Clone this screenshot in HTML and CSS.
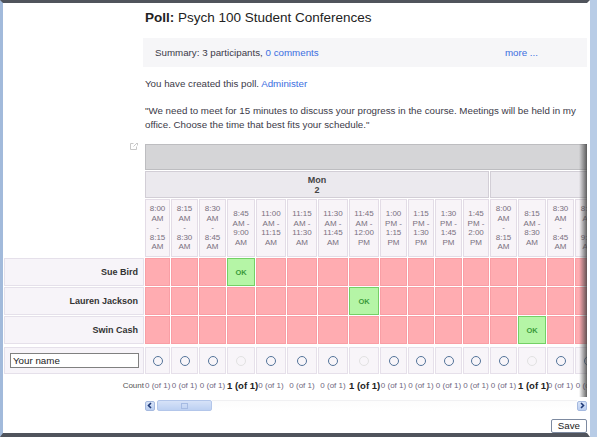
FILE: index.html
```html
<!DOCTYPE html>
<html lang="en">

<head>
  <meta charset="UTF-8">
  <title>Poll: Psych 100 Student Conferences</title>
  <link rel="stylesheet" href="styles.css">
</head>

<body>

  <div class="frame">
    <h1 class="title"><b>Poll:</b> Psych 100 Student Conferences</h1>

    <div class="summary">
      <span>Summary: 3 participants, <a href="#">0 comments</a></span>
      <a class="more" href="#">more ...</a>
    </div>

    <p class="created">You have created this poll. <a href="#">Administer</a></p>

    <p class="quote">"We need to meet for 15 minutes to discuss your progress in the course. Meetings will be held in my<br>office. Choose the time that best fits your schedule."</p>

    <div class="grid-clip">
      <table class="grid">
        <colgroup>
          <col class="c-name">
          <col class="w25"><col class="w27"><col class="w27"><col class="w28">
          <col class="w30"><col class="w30"><col class="w30"><col class="w30">
          <col class="w27"><col class="w26"><col class="w27"><col class="w26">
          <col class="w27"><col class="w28"><col class="w27"><col class="w27">
          <col class="w27"><col class="w27"><col class="w27"><col class="w27">
        </colgroup>

        <tr class="band">
          <th class="corner" rowspan="3">
            <svg class="pop" width="8" height="8" viewBox="0 0 8 8">
              <path d="M3.5 1.5h-3v6h6v-3" fill="none" stroke="#c8c8c8" />
              <path d="M4.5 .5h3v3M7.5 .5 3.5 4.5" fill="none" stroke="#c8c8c8" />
            </svg>
          </th>
          <th class="month" colspan="20"></th>
        </tr>

        <tr class="days">
          <th class="day" colspan="12">Mon<br>2</th>
          <th class="day" colspan="8"></th>
        </tr>

        <tr class="times">
          <th class="time">8:00<br>AM<br>-<br>8:15<br>AM</th>
          <th class="time">8:15<br>AM<br>-<br>8:30<br>AM</th>
          <th class="time">8:30<br>AM<br>-<br>8:45<br>AM</th>
          <th class="time">8:45<br>AM -<br>9:00<br>AM</th>
          <th class="time">11:00<br>AM -<br>11:15<br>AM</th>
          <th class="time">11:15<br>AM -<br>11:30<br>AM</th>
          <th class="time">11:30<br>AM -<br>11:45<br>AM</th>
          <th class="time">11:45<br>AM -<br>12:00<br>PM</th>
          <th class="time">1:00<br>PM -<br>1:15<br>PM</th>
          <th class="time">1:15<br>PM -<br>1:30<br>PM</th>
          <th class="time">1:30<br>PM -<br>1:45<br>PM</th>
          <th class="time">1:45<br>PM -<br>2:00<br>PM</th>
          <th class="time">8:00<br>AM<br>-<br>8:15<br>AM</th>
          <th class="time">8:15<br>AM -<br>8:30<br>AM</th>
          <th class="time">8:30<br>AM<br>-<br>8:45<br>AM</th>
          <th class="time">8:45<br>AM<br>-<br>9:00<br>AM</th>
          <th class="time"></th>
          <th class="time"></th>
          <th class="time"></th>
          <th class="time"></th>
        </tr>

        <tr class="person">
          <th class="name">Sue Bird</th>
          <td class="no"></td><td class="no"></td><td class="no"></td><td class="ok">OK</td>
          <td class="no"></td><td class="no"></td><td class="no"></td><td class="no"></td>
          <td class="no"></td><td class="no"></td><td class="no"></td><td class="no"></td>
          <td class="no"></td><td class="no"></td><td class="no"></td><td class="no"></td>
          <td class="no"></td><td class="no"></td><td class="no"></td><td class="no"></td>
        </tr>
        <tr class="person">
          <th class="name">Lauren Jackson</th>
          <td class="no"></td><td class="no"></td><td class="no"></td><td class="no"></td>
          <td class="no"></td><td class="no"></td><td class="no"></td><td class="ok">OK</td>
          <td class="no"></td><td class="no"></td><td class="no"></td><td class="no"></td>
          <td class="no"></td><td class="no"></td><td class="no"></td><td class="no"></td>
          <td class="no"></td><td class="no"></td><td class="no"></td><td class="no"></td>
        </tr>
        <tr class="person">
          <th class="name">Swin Cash</th>
          <td class="no"></td><td class="no"></td><td class="no"></td><td class="no"></td>
          <td class="no"></td><td class="no"></td><td class="no"></td><td class="no"></td>
          <td class="no"></td><td class="no"></td><td class="no"></td><td class="no"></td>
          <td class="no"></td><td class="ok">OK</td><td class="no"></td><td class="no"></td>
          <td class="no"></td><td class="no"></td><td class="no"></td><td class="no"></td>
        </tr>

        <tr class="spacer"><td colspan="21"></td></tr>

        <tr class="vote">
          <th class="name"><input type="text" class="your-name" value="Your name"></th>
          <td><span class="radio"></span></td><td><span class="radio"></span></td>
          <td><span class="radio"></span></td><td><span class="radio off"></span></td>
          <td><span class="radio"></span></td><td><span class="radio"></span></td>
          <td><span class="radio"></span></td><td><span class="radio off"></span></td>
          <td><span class="radio"></span></td><td><span class="radio"></span></td>
          <td><span class="radio"></span></td><td><span class="radio"></span></td>
          <td><span class="radio"></span></td><td><span class="radio off"></span></td>
          <td><span class="radio"></span></td><td><span class="radio"></span></td>
          <td><span class="radio"></span></td><td><span class="radio"></span></td>
          <td><span class="radio"></span></td><td><span class="radio"></span></td>
        </tr>

        <tr class="count">
          <th class="label">Count</th>
          <td>0 (of 1)</td><td>0 (of 1)</td><td>0 (of 1)</td><td class="full">1 (of 1)</td>
          <td>0 (of 1)</td><td>0 (of 1)</td><td>0 (of 1)</td><td class="full">1 (of 1)</td>
          <td>0 (of 1)</td><td>0 (of 1)</td><td>0 (of 1)</td><td>0 (of 1)</td>
          <td>0 (of 1)</td><td class="full">1 (of 1)</td><td>0 (of 1)</td><td>0 (of 1)</td>
          <td></td><td></td><td></td><td></td>
        </tr>
      </table>
    </div>

    <div class="scrollbar">
      <span class="sb-btn">
        <svg width="6" height="7" viewBox="0 0 6 7"><path d="M4 1 1.5 3.5 4 6" fill="none" stroke="#1f3a78" stroke-width="1.6" /></svg>
      </span>
      <span class="sb-thumb"><span class="grip"></span></span>
      <span class="sb-track"></span>
      <span class="sb-btn">
        <svg width="6" height="7" viewBox="0 0 6 7"><path d="M2 1 4.5 3.5 2 6" fill="none" stroke="#1f3a78" stroke-width="1.6" /></svg>
      </span>
    </div>

    <div class="actions">
      <button class="save">Save</button>
    </div>
  </div>

</body>

</html>
```

FILE: styles.css
```css
body {
  margin: 0;
  background-color: #b8cce6;
  font-family: "Liberation Sans", Arial, sans-serif;
  color: #3c3a48;
}

a {
  color: #3c6ee0;
  text-decoration: none;
}

.frame {
  width: 584px;
  height: 430px;
  background-color: #fff;
  border-left: 3px solid #a2badb;
  border-top: 3px solid #50545c;
  border-bottom: 4px solid #50545c;
  border-right: 3px solid #fff;
  overflow: hidden;
}

.title {
  margin: 7px 0 0 142px;
  font-size: 13.5px;
  line-height: 15.5px;
  font-weight: normal;
  color: #222;
}

.summary {
  display: flex;
  align-items: center;
  width: 432px;
  height: 29px;
  margin: 12.5px 0 0 140px;
  padding-left: 12px;
  background-color: #f6f6f8;
  font-size: 9.75px;
}

.summary .more {
  margin-left: auto;
  margin-right: 49px;
}

.created,
.quote {
  margin: 10px 0 0 142px;
  font-size: 9.75px;
  line-height: 14.5px;
}

.quote {
  margin-top: 12px;
}

/* poll grid */

.grid-clip {
  position: relative;
  width: 584px;
  margin-top: 10.5px;
  overflow: hidden;
}

.grid-clip::after {
  content: "";
  position: absolute;
  top: 1px;
  right: 0;
  bottom: 0;
  width: 8px;
  background: linear-gradient(to right, rgba(90, 90, 90, 0), rgba(60, 60, 60, 0.8));
}

.grid {
  table-layout: fixed;
  width: 712px;
  border-collapse: separate;
  border-spacing: 1px;
}

.grid th,
.grid td {
  padding: 0;
  box-sizing: border-box;
}

.c-name { width: 140px; }
.w25 { width: 25px; }
.w26 { width: 26px; }
.w27 { width: 27px; }
.w28 { width: 28px; }
.w30 { width: 30px; }

.band { height: 26px; }
.days { height: 27px; }
.times { height: 58px; }
.person { height: 28px; }
.spacer { height: 1px; }
.vote { height: 27px; }
.count { height: 21px; }

.corner {
  vertical-align: top;
  text-align: right;
}

.pop {
  display: block;
  margin: -2px 6px 0 auto;
}

.month {
  background-color: #d5d5d7;
  border: 1px solid #bdbdc0;
}

.day {
  background-color: #ebe9ee;
  border: 1px solid #d2ced6;
  font-size: 9px;
  line-height: 10px;
  color: #444;
}

.time {
  background-color: #f8f4f8;
  border: 1px solid #e3dce6;
  font-size: 8px;
  line-height: 9.5px;
  font-weight: normal;
  color: #787080;
}

.name {
  background-color: #f7f4f9;
  border: 1px solid #e5e0ea;
  text-align: right;
  padding-right: 5px !important;
  font-size: 9px;
  color: #333;
}

.no {
  background-color: #ffacb1;
  border: 1px solid #f99ea5;
}

.ok {
  background-color: #b5f5a6;
  border: 1px solid #74d065;
  text-align: center;
  font-size: 7.5px;
  font-weight: bold;
  color: #3b9b3b;
}

.vote .name {
  text-align: left;
  padding-left: 5px !important;
}

.your-name {
  box-sizing: border-box;
  width: 129px;
  height: 15px;
  margin: 0;
  padding: 0 2px;
  border: 1px solid #808080;
  font-family: "Liberation Sans", Arial, sans-serif;
  font-size: 9.75px;
  color: #222;
}

.vote td {
  background-color: #f8f5f9;
  border: 1px solid #e6e0ea;
  text-align: center;
}

.radio {
  display: inline-block;
  width: 10px;
  height: 10px;
  box-sizing: border-box;
  border: 1.5px solid #54749a;
  border-radius: 50%;
  vertical-align: middle;
}

.radio.off {
  border-color: #e2e2e2;
}

.count td,
.count th {
  white-space: nowrap;
  text-align: center;
  font-size: 8px;
  font-weight: normal;
  color: #706880;
}

.count .label {
  text-align: right;
  color: #555;
}

.count .full {
  font-size: 9.5px;
  font-weight: bold;
  color: #222;
}

/* fake horizontal scrollbar */

.scrollbar {
  display: flex;
  align-items: center;
  width: 442px;
  height: 11px;
  margin: 3px 0 0 142px;
}

.sb-btn {
  display: flex;
  align-items: center;
  justify-content: center;
  width: 10px;
  height: 10px;
  box-sizing: border-box;
  background: linear-gradient(#d8e4f8, #b9cdf0);
  border: 1px solid #a5b9df;
  border-radius: 2px;
}

.sb-thumb {
  display: flex;
  align-items: center;
  justify-content: center;
  width: 55px;
  height: 11px;
  margin-left: 2px;
  box-sizing: border-box;
  background: linear-gradient(#d6e2f8, #bcd0f2);
  border: 1px solid #b3c6ea;
  border-radius: 2px;
}

.grip {
  width: 5px;
  height: 4px;
  border: 1px solid #a6bbe3;
}

.sb-track {
  flex: 1;
  align-self: stretch;
  border-top: 1px solid #f0f0f2;
  background: linear-gradient(#fcfcfc, #fff);
}

.actions {
  display: flex;
  justify-content: flex-end;
  margin-top: 8px;
}

.save {
  height: 14px;
  padding: 0 6px;
  background-color: #fff;
  border: 1px solid #7d8aa0;
  border-radius: 2px;
  font-family: "Liberation Sans", Arial, sans-serif;
  font-size: 9.75px;
  line-height: 12px;
  color: #222;
}
```
